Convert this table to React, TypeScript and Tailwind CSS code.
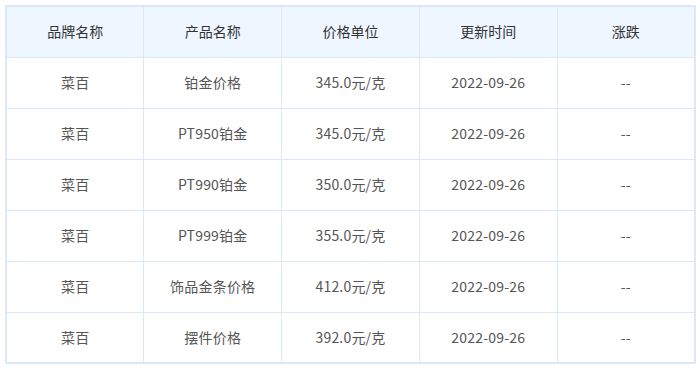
const headers = ['品牌名称', '产品名称', '价格单位', '更新时间', '涨跌'];

const rows = [
  ['菜百', '铂金价格', '345.0元/克', '2022-09-26', '--'],
  ['菜百', 'PT950铂金', '345.0元/克', '2022-09-26', '--'],
  ['菜百', 'PT990铂金', '350.0元/克', '2022-09-26', '--'],
  ['菜百', 'PT999铂金', '355.0元/克', '2022-09-26', '--'],
  ['菜百', '饰品金条价格', '412.0元/克', '2022-09-26', '--'],
  ['菜百', '摆件价格', '392.0元/克', '2022-09-26', '--'],
];

export default function App() {
  return (
    <div className="w-[699px] h-[369px] bg-white pl-[5px] pt-[5px] font-['Noto_Sans_CJK_SC','Noto_Sans',sans-serif] text-[14px]">
      <table className="w-[691px] table-fixed border-collapse border-2 border-[#dce8f7]">
        <thead>
          <tr className="h-[51px] bg-[#eef6ff]">
            {headers.map((h) => (
              <th key={h} className="border border-[#dce8f7] font-normal text-[#333] text-center">
                {h}
              </th>
            ))}
          </tr>
        </thead>
        <tbody>
          {rows.map((row, i) => (
            <tr key={i} className="h-[51px]">
              {row.map((cell, j) => (
                <td key={j} className="border border-[#dce8f7] text-center text-[#555] tracking-[0.2px]">
                  {cell}
                </td>
              ))}
            </tr>
          ))}
        </tbody>
      </table>
    </div>
  );
}
